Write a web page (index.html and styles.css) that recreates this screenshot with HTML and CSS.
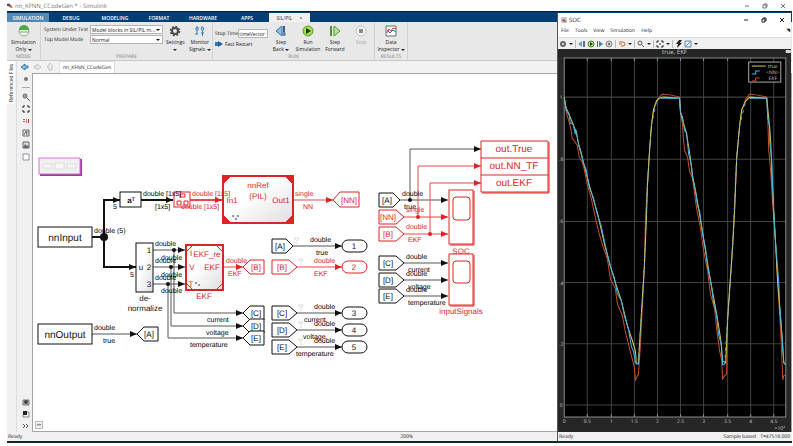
FILE: index.html
```
<!DOCTYPE html>
<html lang="en">
<head>
  <meta charset="UTF-8">
  <title>nn_KFNN_CCodeGen * - Simulink</title>
  <link rel="stylesheet" href="styles.css">
</head>
<body>
  <div class="app">
    <header class="titlebar">
      <svg class="logo" viewBox="0 0 8 8"><path d="M0 1h4v3H0z" fill="#38506e"/><path d="M2 5l3-3 3 5-3-1z" fill="#d9532c"/></svg>
      <h1>nn_KFNN_CCodeGen * - Simulink</h1>
      <div class="controls">
        <button aria-label="Minimize"><svg viewBox="0 0 6 6"><path d="M1 3h4"/></svg></button>
        <button aria-label="Maximize"><svg viewBox="0 0 6 6"><path d="M1 2h3v3H1zM2 2V1h3v3H4"/></svg></button>
        <button aria-label="Close"><svg viewBox="0 0 6 6"><path d="M1 1l4 4M5 1L1 5"/></svg></button>
      </div>
    </header>

    <nav class="tabs">
      <button class="current">SIMULATION</button>
      <button>DEBUG</button>
      <button>MODELING</button>
      <button>FORMAT</button>
      <button>HARDWARE</button>
      <button>APPS</button>
      <button class="open">SIL/PIL <span>×</span></button>
    </nav>

    <div class="toolstrip">
      <section class="group mode">
        <div class="tools">
          <button class="tool">
            <svg viewBox="0 0 12 12"><circle cx="6" cy="6" r="5" fill="#f4f6f4" stroke="#9aa59a"/><path d="M1 5a5 5 0 0 1 10 0z" fill="#4fa944"/><path d="M1 7h10" stroke="#6cb562"/></svg>
            <span>Simulation<br>Only <i></i></span>
          </button>
        </div>
        <h2>MODE</h2>
      </section>
      <section class="group prepare">
        <div class="tools">
          <div class="fields">
            <label for="sut">System Under Test</label>
            <div class="pick"><select id="sut"><option>Model blocks in SIL/PIL m...</option></select></div>
            <label for="topmode">Top Model Mode</label>
            <div class="pick"><select id="topmode"><option>Normal</option></select></div>
          </div>
          <button class="tool">
            <svg viewBox="0 0 12 12"><circle cx="6" cy="6" r="3" fill="none" stroke="#4a4a4a" stroke-width="2"/><circle cx="6" cy="6" r="4.5" fill="none" stroke="#4a4a4a" stroke-width="1.5" stroke-dasharray="2 1.5"/></svg>
            <span>Settings<br><i></i></span>
          </button>
          <button class="tool">
            <svg viewBox="0 0 12 12" fill="none" stroke="#3c7fb5"><path d="M2 2q1.500-1 2.500 1M7 2q1.500-1 2.500 1"/><circle cx="3" cy="4" r="1.300"/><circle cx="8.500" cy="4" r="1.300"/><path d="M3 5v4M8.500 5v6M1 9h3M7 8h3"/></svg>
            <span>Monitor<br>Signals <i></i></span>
          </button>
        </div>
        <h2>PREPARE</h2>
      </section>
      <section class="group run">
        <div class="tools">
          <div class="timing">
            <div class="stop"><label for="stoptime">Stop Time</label><input id="stoptime" value="timeVector"></div>
            <button class="fast"><svg viewBox="0 0 8 6"><path d="M0 1h3v4H0z" fill="#2d7ab8"/><path d="M3 0l5 3-5 3z" fill="#1f5f9c"/></svg>Fast Restart</button>
          </div>
          <button class="tool">
            <svg viewBox="0 0 12 12"><path d="M1 6l6-5v10z" fill="#8fc1e6" stroke="#3d6f9c"/><path d="M9 1v10" stroke="#3d5f80" stroke-width="2"/><circle cx="9" cy="9" r="2" fill="#6d8ba3"/></svg>
            <span>Step<br>Back <i></i></span>
          </button>
          <button class="tool wide">
            <svg viewBox="0 0 12 12"><circle cx="6" cy="6" r="5" fill="#a5dc53" stroke="#5b9b2a"/><path d="M4 3l5 3-5 3z" fill="#173b10"/></svg>
            <span>Run<br>Simulation</span>
          </button>
          <button class="tool">
            <svg viewBox="0 0 12 12"><path d="M2 1v10" stroke="#4c8f3d" stroke-width="2"/><path d="M5 1l6 5-6 5z" fill="#b8e58e" stroke="#4c9b38"/></svg>
            <span>Step<br>Forward</span>
          </button>
          <button class="tool" disabled>
            <svg viewBox="0 0 12 12"><circle cx="6" cy="6" r="5" fill="#f4f4f4" stroke="#c2c2c2"/><path d="M4 4h4v4H4z" fill="#8c8c8c"/></svg>
            <span>Stop</span>
          </button>
        </div>
        <h2>RUN</h2>
      </section>
      <section class="group results">
        <div class="tools">
          <button class="tool">
            <svg viewBox="0 0 12 12" fill="none"><path d="M1 1h10v10H1z" fill="#fff" stroke="#6a6a6a"/><path d="M2 8l2-4 2 2 2-3 3 1" stroke="#c2452d"/><path d="M2 5l3 3 3-3 3 2" stroke="#2d6cb5"/></svg>
            <span>Data<br>Inspector <i></i></span>
          </button>
        </div>
        <h2>RESULTS</h2>
      </section>
    </div>

    <main class="work">
      <aside class="files"><button>Referenced Files</button></aside>
      <div class="editor">
        <div class="crumbs">
          <button aria-label="Back"><svg viewBox="0 0 9 8"><path d="M1 4l4-3v2h3v2H5v2z" fill="#8fc3e3" stroke="#2f7aa8"/></svg></button>
          <button aria-label="Forward"><svg viewBox="0 0 9 8"><path d="M8 4L4 1v2H1v2h3v2z" fill="#eee" stroke="#c4c4c4"/></svg></button>
          <button aria-label="Up"><svg viewBox="0 0 9 8"><path d="M4 0l3 4H6v3H3V4H1z" fill="#eee" stroke="#c4c4c4"/></svg></button>
          <a href="#model">nn_KFNN_CCodeGen</a>
        </div>
        <div class="body">
          <div class="palette">
            <button aria-label="Hide browser"><svg viewBox="0 0 8 8"><circle cx="4" cy="4" r="2" fill="#777"/></svg></button>
            <hr>
            <button aria-label="Zoom"><svg viewBox="0 0 8 8" fill="none" stroke="#555"><circle cx="3" cy="3" r="2"/><path d="M5 5l3 3M2 3h2"/></svg></button>
            <button aria-label="Fit to view"><svg viewBox="0 0 8 8" fill="none" stroke="#222"><path d="M1 3V1h2M5 1h2v2M7 5v2H5M3 7H1V5"/></svg></button>
            <button aria-label="Sample time"><svg viewBox="0 0 8 8"><path d="M1 2h2v1H1zM1 4h2v1H1z" fill="#777"/><path d="M4 2h1v4H4z" fill="#d37b57"/><path d="M6 2h1v4H6z" fill="#a34"/></svg></button>
            <button aria-label="Annotation"><svg viewBox="0 0 8 8" fill="none" stroke="#666"><path d="M1 1h6v6H1z"/><path d="M2 6l2-4 1 4M5 3h2"/></svg></button>
            <button aria-label="Image"><svg viewBox="0 0 8 8"><path d="M1 1h6v6H1z" fill="#ddd" stroke="#666"/><path d="M1 7l2-4 2 2 1-1 1 3z" fill="#666"/></svg></button>
            <button aria-label="Area"><svg viewBox="0 0 8 8"><path d="M1 1h6v6H1z" fill="#fff" stroke="#8a93a6"/></svg></button>
            <div class="spacer"></div>
            <button aria-label="Snapshot"><svg viewBox="0 0 8 8"><path d="M1 2h6v5H1z" fill="#bbb" stroke="#777"/><circle cx="4" cy="4" r="2" fill="#444"/></svg></button>
            <button aria-label="Record"><svg viewBox="0 0 8 8"><path d="M1 1h4v4H1z" fill="#222"/><path d="M5 2h2v5H1V5" fill="none" stroke="#888"/></svg></button>
            <button aria-label="More"><svg viewBox="0 0 8 8" fill="none" stroke="#555"><path d="M1 2l2 2-2 2M4 2l2 2-2 2"/></svg></button>
          </div>
          <div class="canvas" id="model">
            <svg class="diagram" width="524" height="340" viewBox="33 74 524 340">
              <defs>
                <marker id="tip" markerUnits="userSpaceOnUse" markerWidth="7" markerHeight="6" refX="7" refY="3" orient="auto"><path d="M0 0l7 3-7 3z" fill="#111"/></marker>
                <marker id="tipred" markerUnits="userSpaceOnUse" markerWidth="7" markerHeight="6" refX="7" refY="3" orient="auto"><path d="M0 0l7 3-7 3z" fill="#e02224"/></marker>
                <linearGradient id="shade" x1="0" y1="0" x2="1" y2="1"><stop offset="0.400" stop-color="#fff"/><stop offset="1" stop-color="#dedede"/></linearGradient>
                <path id="from" d="M0 -7h17l8 7-8 7H0z"/>
                <path id="goto" d="M0 0l7-7h14v14H7z"/>
                <rect id="port" x="0" y="-6" width="25" height="12" rx="6"/>
                <path id="log" d="M0 0h5l-2 3zM3 4v2" fill="none" stroke="#dadada"/>
              </defs>

              <!-- collapsed banner block -->
              <rect x="40" y="159" width="42" height="17" fill="#943f94"/>
              <rect x="39" y="158" width="41" height="16" fill="#f0f0f0" stroke="#d872d2"/>
              <g fill="#f7f7f7" stroke="#dcdcdc"><rect x="43" y="164" width="9" height="4"/><rect x="55" y="163" width="9" height="6"/><rect x="67" y="164" width="9" height="4"/></g>

              <!-- signal lines -->
              <g class="wire thick">
                <path d="M92 237h12"/>
                <path d="M104 237v-37h16" marker-end="url(#tip)"/>
                <path d="M104 237v30h32" marker-end="url(#tip)"/>
                <path d="M141 200h32" marker-end="url(#tip)"/>
              </g>
              <g class="wire">
                <path d="M153 250h32" marker-end="url(#tip)"/>
                <path d="M153 267h32" marker-end="url(#tip)"/>
                <path d="M153 284h32" marker-end="url(#tip)"/>
                <path d="M92 334h45" marker-end="url(#tip)"/>
                <path d="M174 250v63h69" marker-end="url(#tip)"/>
                <path d="M171 267v59h72" marker-end="url(#tip)"/>
                <path d="M168 284v54h75" marker-end="url(#tip)"/>
                <path d="M293 246h49" marker-end="url(#tip)"/>
                <path d="M297 313h45" marker-end="url(#tip)"/>
                <path d="M297 330h45" marker-end="url(#tip)"/>
                <path d="M297 347h45" marker-end="url(#tip)"/>
                <path d="M400 200h48" marker-end="url(#tip)"/>
                <path d="M410 200v-51h71" marker-end="url(#tip)"/>
                <path d="M404 263h44" marker-end="url(#tip)"/>
                <path d="M404 280h44" marker-end="url(#tip)"/>
                <path d="M404 296h44" marker-end="url(#tip)"/>
              </g>
              <g class="wire red">
                <path d="M190 200h32" marker-end="url(#tipred)" stroke-width="2"/>
                <path d="M294 200h39" marker-end="url(#tipred)"/>
                <path d="M223 267h20" marker-end="url(#tipred)"/>
                <path d="M297 267h45" marker-end="url(#tipred)"/>
                <path d="M404 217h44" marker-end="url(#tipred)"/>
                <path d="M404 234h44" marker-end="url(#tipred)"/>
                <path d="M418 217v-51h63" marker-end="url(#tipred)"/>
                <path d="M430 234v-51h51" marker-end="url(#tipred)"/>
              </g>
              <g fill="#111"><circle cx="104" cy="237" r="4"/><circle cx="174" cy="250" r="2"/><circle cx="171" cy="267" r="2"/><circle cx="168" cy="284" r="2"/><circle cx="410" cy="200" r="2"/></g>
              <g fill="#e02224"><circle cx="418" cy="217" r="2"/><circle cx="430" cy="234" r="2"/></g>
              <use href="#log" x="294" y="238"/><use href="#log" x="298" y="259"/><use href="#log" x="298" y="305"/><use href="#log" x="298" y="322"/><use href="#log" x="298" y="339"/>

              <!-- blocks -->
              <g class="block">
                <rect x="38" y="227" width="54" height="20"/>
                <rect x="38" y="324" width="54" height="20"/>
                <rect x="120" y="192" width="21" height="15"/>
                <rect x="136" y="243" width="17" height="49" fill="url(#shade)"/>
                <use href="#goto" x="137" y="334"/>
                <use href="#goto" x="243" y="313"/><use href="#goto" x="243" y="326"/><use href="#goto" x="243" y="338"/>
                <path d="M272 239h14l7 7-7 7h-14z"/>
                <use href="#from" x="272" y="313"/><use href="#from" x="272" y="330"/><use href="#from" x="272" y="347"/>
                <path d="M379 193h14l7 7-7 7h-14z"/>
                <use href="#from" x="379" y="263"/><use href="#from" x="379" y="280"/><use href="#from" x="379" y="296"/>
                <use href="#port" x="342" y="246"/><use href="#port" x="342" y="313"/><use href="#port" x="342" y="330"/><use href="#port" x="342" y="347"/>
              </g>
              <g class="block red">
                <rect x="174" y="192" width="16" height="15" fill="none"/>
                <path d="M180 194h5v3h-5zM177 201h4v4h-4zM184 201h4v4h-4z"/>
                <rect x="223" y="176" width="70" height="47" fill="url(#shade)" stroke-width="2"/>
                <path class="solid" d="M223 176h8l-8 8zM293 176v8l-8-8zM223 223v-8l8 8zM293 223h-8l8-8z"/>
                <rect x="186" y="245" width="37" height="45" fill="url(#shade)" stroke-width="2"/>
                <path d="M186 252l7-7M223 252l-7-7M186 283l7 7M223 283l-7 7"/>
                <path d="M333 200l7-8h19v15h-19z"/>
                <use href="#goto" x="243" y="267"/>
                <use href="#from" x="272" y="267"/><use href="#from" x="379" y="217"/><use href="#from" x="379" y="234"/>
                <use href="#port" x="342" y="267"/>
                <path d="M481 141h67v51h-67zM481 158h67M481 175h67"/>
                <rect x="449" y="190" width="24" height="54"/><rect x="453" y="197" width="17" height="23" rx="3"/>
                <rect x="449" y="254" width="24" height="51"/><rect x="453" y="261" width="17" height="22" rx="3"/>
                <path d="M549 142v51h-67M474 191v54h-24M474 255v51h-24" fill="none"/>
              </g>
              <g fill="#707784"><circle cx="233" cy="216" r="1"/><circle cx="236" cy="219" r="1"/><circle cx="238" cy="216" r="1"/><circle cx="196" cy="283" r="1"/><circle cx="199" cy="285" r="1"/></g>

              <!-- block names and port labels -->
              <g class="name mid">
                <text class="big" x="65" y="241">nnInput</text><text class="big" x="65" y="338">nnOutput</text>
                <text x="131" y="203" font-weight="bold">a<tspan class="sup" dy="-2">T</tspan></text>
                <text x="149" y="253">1</text><text x="149" y="270">2</text><text x="149" y="287">3</text><text x="141" y="270">u</text>
                <text x="145" y="301">de-</text><text x="145" y="311">normalize</text>
                <text x="149" y="337">[A]</text>
                <text x="256" y="316">[C]</text><text x="256" y="329">[D]</text><text x="256" y="341">[E]</text>
                <text x="280" y="249">[A]</text><text x="282" y="316">[C]</text><text x="282" y="333">[D]</text><text x="282" y="350">[E]</text>
                <text x="387" y="203">[A]</text><text x="388" y="266">[C]</text><text x="388" y="283">[D]</text><text x="388" y="299">[E]</text>
                <text x="354" y="249">1</text><text x="354" y="316">3</text><text x="354" y="333">4</text><text x="354" y="350">5</text>
              </g>
              <g class="name mid red">
                <text x="258" y="188">nnRef</text><text x="258" y="199">(PIL)</text><text x="232" y="203">In1</text><text x="281" y="203">Out1</text>
                <text x="349" y="203">[NN]</text>
                <text x="207" y="257">EKF_re</text><text x="212" y="270">EKF</text><text x="191" y="256">I</text><text x="192" y="270">V</text><text x="191" y="287">T</text>
                <text x="204" y="299">EKF</text>
                <text x="256" y="270">[B]</text><text x="282" y="270">[B]</text><text x="388" y="220">[NN]</text><text x="388" y="237">[B]</text><text x="354" y="270">2</text>
                <text class="big" x="514" y="152">out.True</text><text class="big" x="514" y="169">out.NN_TF</text><text class="big" x="514" y="186">out.EKF</text>
                <text x="461" y="254">SOC</text><text x="461" y="314">inputSignals</text>
              </g>

              <!-- signal names and types -->
              <g class="signal">
                <text x="94" y="233">double (5)</text><text x="113" y="209">5</text><text x="130" y="277">5</text>
                <text x="143" y="196">double [1x5]</text><text x="155" y="209">[1x5]</text>
                <text x="155" y="246">double</text><text x="161" y="260">double</text><text x="155" y="263">double</text>
                <text x="161" y="277">double</text><text x="155" y="280">double</text><text x="161" y="293">double</text>
                <text x="94" y="330">double</text><text x="103" y="343">true</text>
                <text x="207" y="322">current</text><text x="206" y="335">voltage</text><text x="190" y="347">temperature</text>
                <text x="310" y="242">double</text><text x="316" y="255">true</text>
                <text x="314" y="309">double</text><text x="304" y="322">current</text>
                <text x="314" y="326">double</text><text x="303" y="339">voltage</text>
                <text x="314" y="343">double</text><text x="296" y="356">temperature</text>
                <text x="402" y="196">double</text><text x="404" y="209">true</text>
                <text x="406" y="259">double</text><text x="408" y="272">current</text>
                <text x="406" y="276">double</text><text x="408" y="289">voltage</text>
                <text x="406" y="292">double</text><text x="408" y="305">temperature</text>
              </g>
              <g class="signal red">
                <text x="192" y="196">double [1x5]</text><text x="181" y="209">double [1x5]</text>
                <text x="295" y="196">single</text><text x="303" y="209">NN</text>
                <text x="226" y="263">double</text><text x="228" y="276">EKF</text>
                <text x="314" y="263">double</text><text x="314" y="276">EKF</text>
                <text x="406" y="212">single</text><text x="406" y="229">double</text><text x="408" y="242">EKF</text>
              </g>
            </svg>
            <button class="overview" aria-label="Overview"><svg viewBox="0 0 8 8" fill="none" stroke="#777"><path d="M1 4h6M2 4V3h4v1"/></svg></button>
          </div>
        </div>
      </div>
    </main>
    <footer class="status"><span>Ready</span><span class="zoom">200%</span></footer>
  </div>

  <div class="scope">
    <header class="titlebar">
      <svg class="logo" viewBox="0 0 8 8"><path d="M1 1h6v6H1z" fill="#dfe5ea" stroke="#8a9aab"/><path d="M1 5l3-3 3 5-3-1z" fill="#c8401f"/></svg>
      <h1>SOC</h1>
      <div class="controls">
        <button aria-label="Minimize"><svg viewBox="0 0 6 6"><path d="M1 3h4"/></svg></button>
        <button aria-label="Maximize"><svg viewBox="0 0 6 6"><path d="M1 2h3v3H1zM2 2V1h3v3H4"/></svg></button>
        <button aria-label="Close"><svg viewBox="0 0 6 6"><path d="M1 1l4 4M5 1L1 5"/></svg></button>
      </div>
    </header>
    <nav class="menu"><a href="#">File</a><a href="#">Tools</a><a href="#">View</a><a href="#">Simulation</a><a href="#">Help</a><span>◥</span></nav>
    <div class="buttons">
      <button aria-label="Configure"><svg viewBox="0 0 8 8"><circle cx="4" cy="4" r="2" fill="none" stroke="#666" stroke-width="2"/></svg><i></i></button>
      <hr>
      <button aria-label="Step back"><svg viewBox="0 0 8 8"><path d="M0 4l4-3v6z" fill="#6d9dc2"/><path d="M5 1h2v6H5z" fill="#5b7288"/></svg></button>
      <button aria-label="Run"><svg viewBox="0 0 8 8"><circle cx="4" cy="4" r="3" fill="#c4ea86" stroke="#4b7f2a"/><path d="M3 2l3 2-3 2z" fill="#1d3d12"/></svg></button>
      <button aria-label="Step forward"><svg viewBox="0 0 8 8"><path d="M1 1h1v6H1z" fill="#2e6fa3"/><path d="M3 1l4 3-4 3z" fill="#3d85ba"/></svg></button>
      <button aria-label="Stop"><svg viewBox="0 0 8 8"><circle cx="4" cy="4" r="3" fill="#ccc" stroke="#888"/><path d="M3 3h2v2H3z" fill="#777"/></svg></button>
      <hr>
      <button aria-label="Find"><svg viewBox="0 0 8 8" fill="none" stroke="#c4682a"><path d="M1 2h4a2 2 0 0 1 0 4H3M1 4h3"/></svg><i></i></button>
      <hr>
      <button aria-label="Zoom"><svg viewBox="0 0 8 8" fill="none" stroke="#555"><circle cx="3" cy="3" r="2"/><path d="M5 5l2 2"/></svg><i></i></button>
      <hr>
      <button aria-label="Scale axes"><svg viewBox="0 0 8 8" fill="none" stroke="#222"><path d="M1 3V1h2M5 1h2v2M7 5v2H5M3 7H1V5M3 4h2"/></svg><i></i></button>
      <hr>
      <button aria-label="Trigger"><svg viewBox="0 0 8 8"><path d="M4 0h3L5 3h2L2 8l1-4H1z" fill="#222"/></svg></button>
      <button aria-label="Measure"><svg viewBox="0 0 8 8" fill="none" stroke="#5b8fb5"><path d="M1 1h6v6H1zM2 6l4-4"/></svg><i></i></button>
    </div>
    <div class="plot">
      <svg viewBox="559 49 232 382">
        <rect x="565" y="58" width="221" height="358" fill="#000"/>
        <g class="grid">
          <path d="M588 58v358M612 58v358M635 58v358M658 58v358M681 58v358M704 58v358M728 58v358M751 58v358M774 58v358"/>
          <path d="M565 97h221M565 159h221M565 221h221M565 282h221M565 343h221M565 404h221"/>
        </g>
        <path class="axes" d="M565 58h221v358H565zM588 58v3M612 58v3M635 58v3M658 58v3M681 58v3M704 58v3M728 58v3M588 416v-3M612 416v-3M635 416v-3M658 416v-3M681 416v-3M704 416v-3M728 416v-3M751 416v-3M774 416v-3"/>
        <polyline class="ekf" points="565,97 567,112 570,122 572,131 573,138 578,145 580,157 583,162 585,169 588,184 592,198 596,217 600,234 604,247 608,258 611,278 616,288 618,303 623,315 626,331 630,347 632,355 635,366 636,379 638,375 639,374 641,345 645,265 646,218 648,185 650,152 652,125 654,110 657,101 660,97 663,94 672,95 680,97 681,112 683,124 684,140 685,150 688,157 690,171 693,178 697,208 701,228 704,250 708,270 711,294 715,308 717,328 720,350 722,359 723,378 725,375 727,373 728,318 733,245 735,208 737,158 740,125 742,110 746,99 750,94 758,95 767,97 768,118 769,150 771,172 773,205 775,230 778,284 781,332 783,379 784,375 786,374"/>
        <polyline class="true" points="565,97 567,108 569,112 573,122 577,132 580,147 585,165 590,185 598,212 606,247 611,265 616,282 622,300 628,325 633,340 636,350 637,363 639,363 640,345 645,265 647,218 648,185 650,152 652,125 654,110 657,101 660,98 664,97 680,98 681,112 684,123 687,134 690,152 693,175 698,202 703,232 708,263 712,286 717,313 721,338 723,360 726,362 728,318 733,245 735,208 737,158 740,125 742,110 746,101 750,97 767,98 769,118 771,142 772,172 774,212 776,245 778,282 782,332 784,362 786,364"/>
        <polyline class="nn" points="565,98 567,110 570,115 571,123 574,124 576,134 577,130 579,143 582,152 584,162 587,170 590,187 594,197 598,214 602,226 606,245 611,266 615,277 618,293 622,300 625,315 629,328 632,346 634,350 636,361 637,363 639,363"/>
        <polyline class="nn" points="661,98 680,98 681,112 683,117 685,130 687,132 689,153 692,166 693,178 696,190 698,206 700,210 703,233 706,248 708,266 712,286 714,303 717,314 719,334 722,345 723,364 725,364"/>
        <polyline class="nn" points="750,98 767,98 768,118 770,126 770,142 772,160 773,190 774,212 776,245 779,282 780,306 782,332 784,362 786,364"/>
        <path class="nn rise" d="M639 363l1-18 5-80 3-80 4-60 5-24M725 364l3-46 5-73 4-87 3-33 6-24"/>
        <g class="tick">
          <text class="title" x="675" y="54">true, EKF</text>
          <text x="565" y="422">0</text><text x="588" y="422">0.5</text><text x="612" y="422">1</text><text x="635" y="422">1.5</text><text x="658" y="422">2</text><text x="681" y="422">2.5</text><text x="704" y="422">3</text><text x="728" y="422">3.5</text><text x="751" y="422">4</text><text x="774" y="422">4.5</text>
          <text x="780" y="429">×10⁴</text>
          <text x="562" y="99">1</text><text x="562" y="161">.8</text><text x="562" y="223">.6</text><text x="562" y="284">.4</text><text x="562" y="345">.2</text><text x="562" y="406">0</text>
        </g>
        <rect x="749" y="62" width="32" height="20" fill="#000" stroke="#aaa"/>
        <path class="true" d="M752 66h14"/>
        <path class="nn" d="M752 74h4v-3h4"/>
        <path class="ekf" d="M752 81h4v-3h4"/>
        <g class="tick"><text x="773" y="68">true</text><text x="773" y="74">&lt;NN&gt;</text><text x="773" y="80">EKF</text></g>
        <path d="M786 50h5v3h-5z" fill="#ddd"/>
      </svg>
    </div>
    <footer class="status"><span>Ready</span><span class="sample">Sample based</span><span>T=47518.000</span></footer>
  </div>
</body>
</html>
```
FILE: styles.css
```
* {
  box-sizing: border-box;
}
body {
  margin: 0;
  background: #fff;
  font-family: 'Open Sans', sans-serif;
  font-size: 5px;
  line-height: 6px;
  color: #222;
  text-rendering: geometricPrecision;
}
h1, h2 {
  margin: 0;
  font-weight: normal;
}
button, input, select {
  font: inherit;
  color: inherit;
  margin: 0;
  padding: 0;
  border: 0;
  background: none;
}
a {
  color: inherit;
  text-decoration: none;
}
i {
  display: inline-block;
  border: 2px solid transparent;
  border-top-color: #222;
  border-bottom: 0;
}
svg {
  display: block;
}

.app {
  display: flex;
  flex-direction: column;
  height: calc(100vh - 3px);
  margin: 0 1px 0 7px;
  border-bottom: 2px solid #12281c;
}
.titlebar {
  display: flex;
  align-items: center;
  gap: 2px;
  height: 11px;
  background: #fff;
}
.titlebar h1 {
  font-size: 6px;
  flex: 1;
}
.app .titlebar h1, .app .controls {
  color: #777;
}
.logo {
  width: 6px;
  height: 6px;
}
.controls {
  display: flex;
  gap: 12px;
  padding-right: 6px;
}
.controls svg {
  width: 6px;
  height: 6px;
  fill: none;
  stroke: currentColor;
}

.tabs {
  display: flex;
  height: 11px;
  padding-top: 1px;
  background: #003e73;
  border-top: 1px solid #0a1f3d;
}
.tabs button {
  width: 44px;
  color: #fff;
  font-weight: 600;
}
.tabs .current {
  width: 42px;
  background: #5688b2;
}
.tabs .open {
  width: 41px;
  background: #f0f0f0;
  color: #333;
  font-weight: normal;
}
.open span {
  margin-left: 6px;
}

.toolstrip {
  display: flex;
  height: 39px;
  background: #e8e8e8;
  border-bottom: 1px solid #c8c8c8;
}
.group {
  display: flex;
  flex-direction: column;
  justify-content: space-between;
  border-right: 1px solid #d2d2d2;
  padding-top: 3px;
}
.group h2 {
  font-size: 5px;
  text-align: center;
  color: #777;
}
.mode { width: 34px; }
.prepare { width: 172px; }
.run { width: 162px; }
.results { width: 33px; }
.tools {
  display: flex;
}
.tool {
  display: flex;
  flex-direction: column;
  align-items: center;
  gap: 2px;
  width: 27px;
  white-space: nowrap;
  line-height: 7px;
}
.mode .tool, .results .tool {
  width: 100%;
}
.tool.wide {
  width: 29px;
}
.tool svg {
  width: 12px;
  height: 12px;
}
.tool:disabled {
  color: #aaa;
}
.fields {
  display: grid;
  grid-template-columns: 46px 73px;
  gap: 1px 0;
  align-content: start;
  align-items: center;
  padding-left: 3px;
}
.pick {
  position: relative;
}
.pick select {
  display: block;
  appearance: none;
  width: 100%;
  height: 9px;
  padding: 0 1px;
  background: #fff;
  border: 1px solid #b5b5b5;
}
.pick::after {
  content: '';
  position: absolute;
  right: 3px;
  top: 4px;
  border: 2px solid transparent;
  border-top-color: #111;
  border-bottom: 0;
}
.timing {
  display: flex;
  flex-direction: column;
  gap: 3px;
  width: 55px;
  padding: 4px 0 0 2px;
}
.stop {
  display: flex;
  align-items: center;
  justify-content: space-between;
  white-space: nowrap;
}
.stop input {
  flex: none;
  width: 30px;
  height: 9px;
  background: #fff;
  border: 1px solid #b5b5b5;
}
.fast {
  display: flex;
  align-items: center;
  gap: 2px;
}
.fast svg {
  width: 8px;
  height: 6px;
}

.work {
  display: flex;
  flex: 1;
  min-height: 0;
  background: #f0f0f0;
}
.files {
  width: 10px;
  border-right: 1px solid #ddd;
}
.files button {
  writing-mode: vertical-rl;
  transform: rotate(180deg);
  width: 8px;
  height: 43px;
  background: #fff;
}
.editor {
  flex: 1;
  display: flex;
  flex-direction: column;
  min-width: 0;
  padding-left: 2px;
}
.crumbs {
  display: flex;
  align-items: center;
  gap: 4px;
  height: 12px;
  padding-left: 1px;
  background: #f2f2f2;
}
.crumbs button svg {
  width: 9px;
  height: 8px;
}
.crumbs a {
  padding: 3px;
  background: #fff;
  border: 1px solid #ddd;
  border-bottom: 0;
}
.body {
  display: flex;
  flex: 1;
  min-height: 0;
}
.palette {
  display: flex;
  flex-direction: column;
  align-items: center;
  gap: 4px;
  width: 13px;
  padding: 2px 0;
}
.palette svg {
  width: 8px;
  height: 8px;
}
.palette hr {
  width: 8px;
  margin: 0 0 1px;
  border: 0;
  border-top: 1px solid #aaa;
}
.spacer {
  flex: 1;
}
.canvas {
  flex: 1;
  display: flex;
  flex-direction: column;
  align-items: flex-start;
  justify-content: space-between;
  overflow: hidden;
  background: #fff;
  border: 1px solid #a5a5a5;
}
.overview {
  margin: 0 0 2px 2px;
  border: 1px solid #bbb;
  background: #f4f4f4;
}
.overview svg {
  width: 6px;
  height: 6px;
}
.status {
  display: flex;
  align-items: center;
  height: 9px;
  background: #f0f0f0;
  padding: 0 1px;
}
.zoom {
  margin: auto;
}

/* model diagram */
.diagram {
  flex: none;
  font-family: 'Liberation Sans', Arial, sans-serif;
}
.wire {
  fill: none;
  stroke: #555;
}
.wire.thick {
  stroke: #111;
  stroke-width: 2;
}
.wire.red {
  stroke: #e8484a;
}
.block {
  fill: #fff;
  stroke: #111;
}
.block.red {
  stroke: #dc2426;
}
.block .solid {
  fill: #dc2426;
}
.name {
  font-size: 8px;
  fill: #111;
}
.big {
  font-size: 10px;
}
.sup {
  font-size: 5px;
}
.mid {
  text-anchor: middle;
}
.signal {
  font-size: 7px;
  fill: #000;
}
.name.red, .signal.red {
  fill: #dc2426;
}

/* scope window floats over the editor */
.scope {
  position: absolute;
  top: 13px;
  right: 2px;
  bottom: 5px;
  width: 234px;
  display: flex;
  flex-direction: column;
  background: #fff;
  border-left: 1px solid #555;
}
.scope .titlebar {
  height: 13px;
  padding-left: 3px;
}
.menu {
  display: flex;
  gap: 6px;
  height: 11px;
  padding: 2px 1px 0 3px;
}
.menu span {
  margin-left: auto;
}
.buttons {
  display: flex;
  align-items: center;
  gap: 1px;
  height: 12px;
  padding-left: 1px;
  background: #f0f0f0;
  border-top: 1px solid #ddd;
}
.buttons button {
  display: flex;
  align-items: center;
  gap: 2px;
}
.buttons svg {
  width: 8px;
  height: 8px;
}
.buttons hr {
  height: 8px;
  margin: 0 1px;
  border: 0;
  border-left: 1px solid #bbb;
}
.plot {
  flex: 1;
  min-height: 0;
  background: #262626;
}
.plot svg {
  width: 100%;
  height: 100%;
}
.grid {
  stroke: #424242;
}
.axes {
  fill: none;
  stroke: #8a8a8a;
}
.true, .nn, .ekf {
  fill: none;
  stroke: #d8cf4a;
}
.nn {
  stroke: #45b4ee;
}
.rise {
  stroke-dasharray: 3 4;
}
.ekf {
  stroke: #c4502a;
}
.tick {
  font-size: 5px;
  fill: #c8c8c8;
  text-anchor: middle;
}
.tick .title {
  font-size: 6px;
}
.sample {
  margin: 0 4px 0 auto;
}
```
